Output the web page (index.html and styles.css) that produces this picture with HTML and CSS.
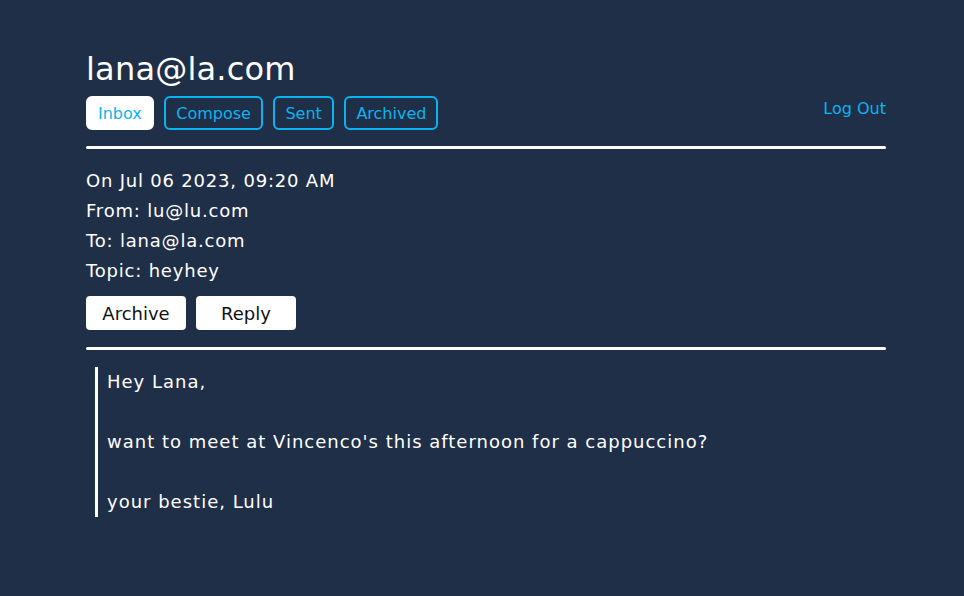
FILE: index.html
```html
<!DOCTYPE html>
<html>
<head>
<meta charset="utf-8">
<link rel="stylesheet" href="styles.css">
</head>
<body>
<div class="page">
  <h1 class="user">lana@la.com</h1>
  <div class="nav">
    <div class="tabs">
      <button class="tab active">Inbox</button>
      <button class="tab">Compose</button>
      <button class="tab">Sent</button>
      <button class="tab">Archived</button>
    </div>
    <a class="logout">Log Out</a>
  </div>
  <div class="rule"></div>
  <div class="meta">
    <div>On Jul 06 2023, 09:20 AM</div>
    <div>From: lu@lu.com</div>
    <div>To: lana@la.com</div>
    <div>Topic: heyhey</div>
  </div>
  <div class="actions">
    <button class="act">Archive</button>
    <button class="act">Reply</button>
  </div>
  <div class="rule"></div>
  <div class="body">
    <div>Hey Lana,</div>
    <div>&nbsp;</div>
    <div>want to meet at Vincenco's this afternoon for a cappuccino?</div>
    <div>&nbsp;</div>
    <div>your bestie, Lulu</div>
  </div>
</div>
</body>
</html>
```
FILE: styles.css
```css
html, body {
  margin: 0;
  padding: 0;
  background: #1f2f48;
  color: #ffffff;
  font-family: "DejaVu Sans", "Open Sans", sans-serif;
}
.page {
  width: 800px;
  margin-left: 86px;
  padding-top: 50px;
}
.user {
  margin: 0;
  font-size: 32px;
  font-weight: normal;
  letter-spacing: 0.2px;
  line-height: 38px;
  height: 46px;
}
.nav {
  display: flex;
  justify-content: space-between;
  align-items: flex-start;
}
.tabs {
  display: flex;
  gap: 10.5px;
}
.tab {
  font-family: inherit;
  font-size: 16px;
  color: #0ab4f0;
  background: transparent;
  border: 2px solid #0ab4f0;
  border-radius: 6px;
  height: 34px;
  padding: 0 10px;
  cursor: pointer;
}
.tab.active {
  background: #ffffff;
  border-color: #ffffff;
}
.logout {
  color: #0ab4f0;
  font-size: 16px;
  line-height: 24px;
  margin-top: 1px;
}
.rule {
  height: 3px;
  background: #ffffff;
  border-radius: 2px;
  margin-top: 16px;
}
.meta {
  margin-top: 17px;
  font-size: 18px;
  letter-spacing: 0.8px;
  line-height: 30px;
}
.actions {
  display: flex;
  gap: 10px;
  margin-top: 10px;
}
.act {
  width: 100px;
  height: 34px;
  font-family: inherit;
  font-size: 18px;
  color: #111;
  background: #ffffff;
  border: none;
  border-radius: 4px;
}
.actions + .rule {
  margin-top: 17px;
}
.body {
  margin: 17px 0 0 9px;
  border-left: 3px solid #ffffff;
  padding-left: 9px;
  font-size: 18px;
  letter-spacing: 1px;
  line-height: 30px;
}
```
